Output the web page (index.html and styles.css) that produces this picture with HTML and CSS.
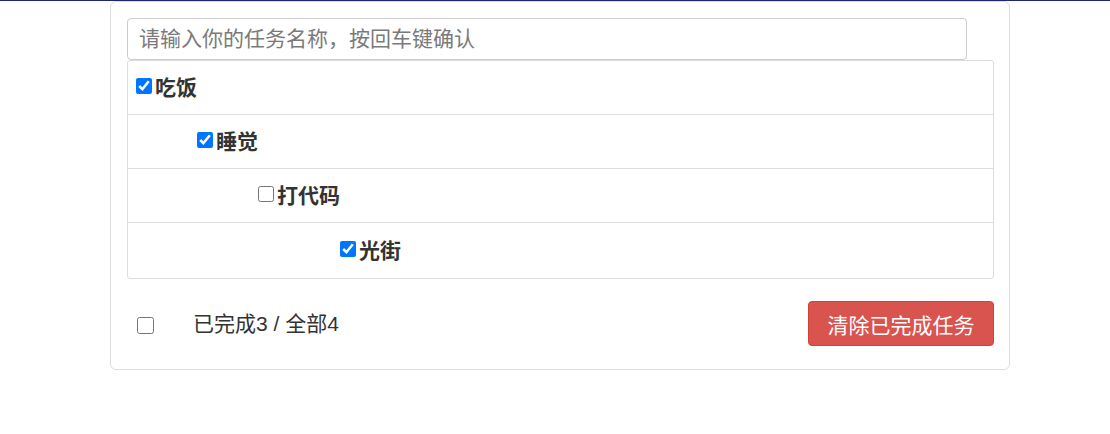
FILE: index.html
```html
<!DOCTYPE html>
<html lang="zh-CN">
<head>
<meta charset="utf-8">
<title>Todo</title>
<link rel="stylesheet" href="styles.css">
</head>
<body>
<div class="topbar"></div>
<div class="card">
  <input class="task-input" type="text" placeholder="请输入你的任务名称，按回车键确认">
  <ul class="list">
    <li class="item level-0"><input type="checkbox" class="cb" checked><span class="label">吃饭</span></li>
    <li class="item level-1"><input type="checkbox" class="cb" checked><span class="label">睡觉</span></li>
    <li class="item level-2"><input type="checkbox" class="cb"><span class="label">打代码</span></li>
    <li class="item level-3"><input type="checkbox" class="cb" checked><span class="label">光街</span></li>
  </ul>
  <div class="footer">
    <div class="footer-left">
      <input type="checkbox" class="cb-all">
      <span class="count">已完成3 / 全部4</span>
    </div>
    <button class="btn-danger" type="button">清除已完成任务</button>
  </div>
</div>
</body>
</html>
```
FILE: styles.css
```css
* { box-sizing: border-box; }
html, body {
  margin: 0;
  padding: 0;
  background: #fff;
}
body {
  font-family: "Liberation Sans", "Noto Sans CJK SC", sans-serif;
  color: #333;
  font-size: 21px;
}
.topbar {
  height: 1px;
  background: #1f2670;
}
.card {
  margin-left: 110px;
  width: 900px;
  border: 1px solid #ddd;
  border-radius: 6px;
  padding: 16px 15px 23px 16px;
}
.task-input {
  display: block;
  width: 840px;
  height: 42px;
  margin: 0;
  border: 1px solid #ccc;
  border-radius: 4px;
  padding: 0 11px;
  font-family: inherit;
  font-size: 21px;
  color: #555;
  outline: none;
}
.task-input::placeholder {
  color: #7a7a7a;
}
.list {
  list-style: none;
  margin: 0;
  padding: 0;
  border: 1px solid #ddd;
  border-radius: 3px;
}
.item {
  display: flex;
  align-items: center;
  height: 54px;
  padding-left: 8px;
  border-top: 1px solid #ddd;
}
.item:first-child {
  border-top: none;
  height: 53px;
}
.item:last-child {
  height: 56px;
}
.level-1 { padding-left: 69px; }
.level-2 { padding-left: 130px; }
.level-3 { padding-left: 212px; }
.cb {
  width: 16px;
  height: 16px;
  margin: 0 3px 4px 0;
}
.label {
  font-weight: bold;
  font-size: 21px;
  line-height: 24px;
}
.footer {
  display: flex;
  align-items: center;
  justify-content: space-between;
  margin-top: 22px;
}
.footer-left {
  display: flex;
  align-items: center;
}
.cb-all {
  width: 17px;
  height: 17px;
  margin: 3px 39px 0 10px;
}
.count {
  font-size: 21px;
  line-height: 24px;
}
.btn-danger {
  height: 45px;
  width: 186px;
  padding: 0;
  margin: 0;
  background: #d9534f;
  border: 1px solid #d43f3a;
  border-radius: 4px;
  color: #fff;
  font-family: inherit;
  font-size: 21px;
  cursor: pointer;
}
```
